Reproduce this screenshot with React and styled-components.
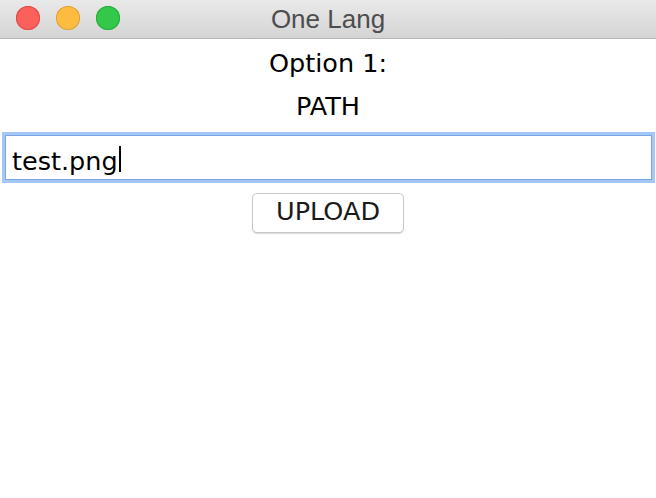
import React from 'react';
import styled, { createGlobalStyle } from 'styled-components';

const GlobalStyle = createGlobalStyle`
  html, body {
    margin: 0;
    padding: 0;
    background: #ffffff;
  }
  body {
    font-family: "DejaVu Sans", "Liberation Sans", sans-serif;
  }
`;

const App = () => {
  return (
    <>
      <GlobalStyle />
      <Window>
        <TitleBar>
          <Lights>
            <Light color="#fc605b" edge="#de4a44" />
            <Light color="#fdbc40" edge="#dea236" />
            <Light color="#34c84a" edge="#2aa83d" />
          </Lights>
          <Title>One Lang</Title>
        </TitleBar>
        <Body>
          <Label>Option 1:</Label>
          <Label>PATH</Label>
          <PathField>
            <PathText>test.png</PathText>
            <Caret />
          </PathField>
          <UploadButton>UPLOAD</UploadButton>
        </Body>
      </Window>
    </>
  );
};

const Window = styled.div`
  width: 656px;
  height: 498px;
  display: flex;
  flex-direction: column;
  background: #ffffff;
`;

const TitleBar = styled.div`
  height: 38px;
  flex-shrink: 0;
  position: relative;
  display: flex;
  align-items: center;
  justify-content: center;
  background: linear-gradient(to bottom, #e9e9e9, #d4d4d4);
  border-bottom: 1px solid #b4b4b4;
`;

const Lights = styled.div`
  position: absolute;
  left: 16px;
  top: 6px;
  display: flex;
  gap: 16px;
`;

const Light = styled.span`
  width: 24px;
  height: 24px;
  border-radius: 50%;
  background: ${({ color }) => color};
  box-shadow: inset 0 0 0 1px ${({ edge }) => edge};
`;

const Title = styled.div`
  font-family: "Liberation Sans", Arial, sans-serif;
  font-size: 26px;
  color: #4d4d4d;
`;

const Body = styled.div`
  display: flex;
  flex-direction: column;
  align-items: center;
  padding-top: 3px;
`;

const Label = styled.div`
  font-size: 25.5px;
  color: #000;
  line-height: 43px;
`;

const PathField = styled.div`
  align-self: stretch;
  box-sizing: border-box;
  margin: 7px 4px 0 5px;
  height: 45px;
  display: flex;
  align-items: center;
  padding: 7px 0 0 6px;
  border: 1px solid #7aa7dd;
  box-shadow: 0 0 0 3px #a3c8f5;
  background: #ffffff;
`;

const PathText = styled.span`
  font-size: 25.5px;
  color: #000;
`;

const Caret = styled.span`
  width: 2px;
  height: 26px;
  margin: -5px 0 0 1px;
  background: #000;
`;

const UploadButton = styled.button`
  margin-top: 13px;
  box-sizing: border-box;
  width: 152px;
  height: 40px;
  border-radius: 5px;
  border: 1px solid #c8c8c8;
  background: #ffffff;
  box-shadow: 0 1px 1px rgba(0, 0, 0, 0.15);
  font-family: "DejaVu Sans", "Liberation Sans", sans-serif;
  font-size: 25.5px;
  color: #1a1a1a;
  padding: 0 0 4px 0;
`;

export default App;
